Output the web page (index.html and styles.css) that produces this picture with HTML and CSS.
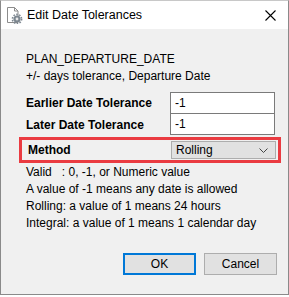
FILE: index.html
```html
<!DOCTYPE html>
<html lang="en">
  <head>
    <meta charset="UTF-8" />
    <title>Edit Date Tolerances</title>
    <link rel="stylesheet" href="styles.css">
  </head>
  <body>
    <div class="window">
      <!--Title bar-->
      <div class="titlebar">
        <svg class="app-icon" width="18" height="18" viewBox="0 0 18 18">
          <path d="M2.5 1.5h7l3.5 3.5v11.5h-10.5z" fill="#fff" stroke="#8c8c8c"/>
          <path d="M9.5 1.5v3.5h3.5" fill="none" stroke="#8c8c8c"/>
          <circle cx="12" cy="13" r="3.6" fill="#7d8790"/>
          <circle cx="12" cy="13" r="4.6" fill="none" stroke="#7d8790" stroke-width="1.6" stroke-dasharray="1.6 1.3"/>
          <circle cx="12" cy="13" r="1.4" fill="#e8e8e8"/>
        </svg>
        <span class="title">Edit Date Tolerances</span>
        <span class="close">
          <svg width="11" height="11" viewBox="0 0 11 11">
            <path d="M0.5 0.5l10 10M10.5 0.5l-10 10" stroke="#000" stroke-width="1.1"/>
          </svg>
        </span>
      </div>

      <div class="content">
        <div class="intro">
          <div>PLAN_DEPARTURE_DATE</div>
          <div>+/- days tolerance, Departure Date</div>
        </div>

        <div class="form">
          <label class="field-label" for="earlier">Earlier Date Tolerance</label>
          <input class="field" type="text" id="earlier" value="-1" />
          <label class="field-label" for="later">Later Date Tolerance</label>
          <input class="field second" type="text" id="later" value="-1" />
        </div>

        <div class="method-row">
          <span class="field-label">Method</span>
          <div class="dropdown">
            <span>Rolling</span>
            <svg width="9" height="5" viewBox="0 0 9 5">
              <path d="M0.5 0.5l4 4 4-4" fill="none" stroke="#444" stroke-width="1"/>
            </svg>
          </div>
        </div>

        <div class="help">
          <div>Valid &nbsp;&nbsp;: 0, -1, or Numeric value</div>
          <div>A value of -1 means any date is allowed</div>
          <div>Rolling: a value of 1 means 24 hours</div>
          <div>Integral: a value of 1 means 1 calendar day</div>
        </div>

        <div class="buttons">
          <button class="btn btn-default">OK</button>
          <button class="btn">Cancel</button>
        </div>
      </div>
    </div>
  </body>
</html>
```

FILE: styles.css
```css
body {
  margin: 0;
  background: #fff;
  font-family: "Liberation Sans", Arial, sans-serif;
  font-size: 12px;
  color: #000;
}
.window {
  width: 289px;
  height: 295px;
  box-sizing: border-box;
  border: 1px solid #8a8a8a;
  border-top-color: #c8c8c8;
  background: #f0f0f0;
  display: flex;
  flex-direction: column;
}
/* Title bar */
.titlebar {
  height: 28px;
  flex-shrink: 0;
  background: #fff;
  display: flex;
  align-items: center;
  padding-left: 4px;
}
.app-icon {
  margin-right: 4px;
}
.title {
  font-size: 12.5px;
  flex: 1;
}
.close {
  width: 30px;
  display: flex;
  justify-content: center;
  margin-right: 3px;
}
/* Content */
.content {
  flex: 1;
  padding: 22px 10px 0 25px;
  display: flex;
  flex-direction: column;
}
.intro {
  line-height: 17px;
}
.form {
  margin-top: 7px;
  display: grid;
  grid-template-columns: 144px 105px;
}
.field-label {
  font-weight: bold;
  display: flex;
  align-items: center;
}
.field {
  font: inherit;
  height: 22px;
  box-sizing: border-box;
  border: 1px solid #7a7a7a;
  background: #fff;
  padding: 0 4px;
  margin: 0;
  outline: none;
}
.field.second {
  margin-top: -1px;
}
.method-row {
  margin: 2px 0 0 -7px;
  width: 262px;
  height: 26px;
  box-sizing: border-box;
  border: 3px solid #ea3b41;
  display: flex;
  align-items: center;
  padding-left: 6px;
}
.method-row .field-label {
  width: 143px;
}
.dropdown {
  width: 105px;
  height: 18px;
  box-sizing: border-box;
  background: #e1e1e1;
  border: 1px solid #adadad;
  display: flex;
  align-items: center;
  justify-content: space-between;
  padding: 0 7px 0 4px;
}
.help {
  margin-top: 1px;
  line-height: 17px;
}
.buttons {
  margin-top: 21px;
  display: flex;
  justify-content: flex-end;
  gap: 8px;
  padding-right: 1px;
}
.btn {
  font: inherit;
  width: 73px;
  height: 22px;
  background: #e1e1e1;
  border: 1px solid #adadad;
  padding: 0;
}
.btn-default {
  border: 2px solid #0078d7;
}
```
